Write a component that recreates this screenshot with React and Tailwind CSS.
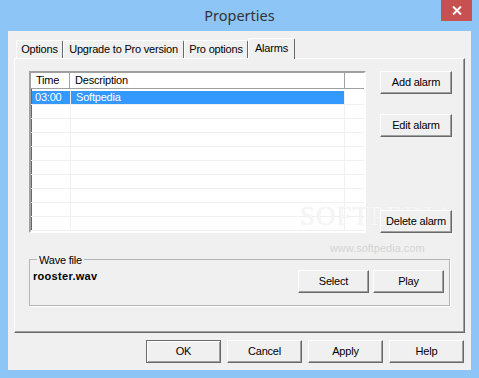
import React from 'react'

const Btn = ({ children, className = '', isDefault = false }) => (
  <button
    className={
      'relative z-10 flex items-center justify-center bg-[#f0f0f0] text-black ' +
      (isDefault
        ? 'border border-[#696969] shadow-[inset_1px_1px_0_#ffffff,inset_-1px_-1px_0_#a0a0a0] '
        : 'border border-t-white border-l-white border-r-[#696969] border-b-[#696969] shadow-[inset_-1px_-1px_0_#a0a0a0] ') +
      className
    }
  >
    {children}
  </button>
)

const tabs = [
  { label: 'Options', w: 'w-[47px]' },
  { label: 'Upgrade to Pro version', w: 'w-[121px]' },
  { label: 'Pro options', w: 'w-[64px]' },
]

const rows = Array.from({ length: 10 })

export default function App() {
  return (
    <div className="relative w-[479px] h-[378px] bg-[#8dc6f6] flex flex-col font-['Liberation_Sans',Arial,sans-serif] text-[11px] tracking-[-0.2px] text-black overflow-hidden">
      {/* title bar */}
      <div className="relative h-[31px] flex items-center justify-center">
        <span className="font-['Noto_Sans',sans-serif] text-[14.5px] tracking-normal text-[#333333] leading-none -mt-[1px]">Properties</span>
        <div className="absolute right-[7px] top-0 w-[31px] h-[21px] bg-[#c75050] flex items-center justify-center">
          <svg width="10" height="9" viewBox="0 0 10 9">
            <path d="M1 0.5 L9 8.5 M9 0.5 L1 8.5" stroke="#ffffff" strokeWidth="2" />
          </svg>
        </div>
      </div>

      {/* client area */}
      <div className="mx-[8px] h-[339px] bg-[#f0f0f0] flex flex-col">
        {/* tabs */}
        <div className="ml-[8px] mt-[7px] h-[20px] flex items-end relative z-10">
          {tabs.map(t => (
            <div
              key={t.label}
              className={t.w + ' h-[18px] flex items-center justify-center border-t border-l border-white border-r border-r-[#696969] rounded-t-[2px] whitespace-nowrap'}
            >
              {t.label}
            </div>
          ))}
          <div className="w-[47px] h-[21px] -mb-[1px] flex items-center justify-center bg-[#f0f0f0] border-t border-l border-white border-r border-r-[#696969] rounded-t-[2px] pb-[1px]">
            Alarms
          </div>
        </div>

        {/* tab panel */}
        <div className="ml-[6px] w-[451px] h-[275px] border border-t-white border-l-white border-r-[#696969] border-b-[#696969] shadow-[inset_-1px_-1px_0_#a0a0a0] pt-[12px] pl-[14px] flex flex-col">
          <div className="flex">
            {/* list view */}
            <div className="w-[337px] h-[162px] bg-white border-2 border-t-[#a0a0a0] border-l-[#a0a0a0] border-r-white border-b-white shadow-[inset_1px_1px_0_#696969] overflow-hidden">
              <div className="h-[16px] flex border-b border-[#a0a0a0] bg-white">
                <div className="w-[39px] pl-[5px] border-r border-[#a0a0a0] flex items-center">Time</div>
                <div className="w-[275px] pl-[5px] border-r border-[#a0a0a0] flex items-center">Description</div>
              </div>
              <div className="pt-[2px]">
                {rows.map((_, i) => (
                  <div key={i} className="h-[14px] flex border-b border-[#f0f0f0]">
                    <div className="w-[40px] border-r border-[#f0f0f0] pl-[1px]">
                      {i === 0 && <div className="h-[13px] bg-[#3399ff] text-white pl-[3px] leading-[13px]">03:00</div>}
                    </div>
                    <div className="w-[274px] border-r border-[#f0f0f0]">
                      {i === 0 && <div className="h-[13px] bg-[#3399ff] text-white pl-[5px] leading-[13px]">Softpedia</div>}
                    </div>
                  </div>
                ))}
              </div>
            </div>

            {/* side buttons */}
            <div className="ml-[14px] flex flex-col">
              <Btn className="w-[72px] h-[23px]">Add alarm</Btn>
              <Btn className="w-[72px] h-[23px] mt-[20px]">Edit alarm</Btn>
              <Btn className="w-[72px] h-[23px] mt-[73px]">Delete alarm</Btn>
            </div>
          </div>

          {/* wave file group */}
          <div className="relative mt-[26px] w-[421px] h-[47px] border border-[#b5b5b5] shadow-[1px_1px_0_#ffffff] flex items-start justify-between pt-[10px] pl-[3px] pr-[5px]">
            <span className="absolute -top-[8px] left-[7px] px-[2px] bg-[#f0f0f0]">Wave file</span>
            <span className="font-bold text-[11px] tracking-[0.3px] leading-[13px]">rooster.wav</span>
            <div className="flex gap-[4px]">
              <Btn className="w-[71px] h-[23px]">Select</Btn>
              <Btn className="w-[71px] h-[23px]">Play</Btn>
            </div>
          </div>
        </div>

        {/* dialog buttons */}
        <div className="mt-[7px] pr-[7px] flex justify-end gap-[6px]">
          <Btn isDefault className="w-[75px] h-[23px]">OK</Btn>
          <Btn className="w-[75px] h-[23px]">Cancel</Btn>
          <Btn className="w-[75px] h-[23px]">Apply</Btn>
          <Btn className="w-[75px] h-[23px]">Help</Btn>
        </div>
      </div>

      {/* watermark */}
      <div className="absolute z-0 left-[300px] top-[203px] flex flex-col items-center pointer-events-none">
        <span className="font-['Liberation_Serif',serif] text-[27px] tracking-[1px] text-white/70 [text-shadow:0_0_1px_#e0e0e0] leading-none">SOFTPEDIA</span>
        <span className="mt-[10px] text-[11px] tracking-normal text-[#d4d4d4]">www.softpedia.com</span>
      </div>
    </div>
  )
}
